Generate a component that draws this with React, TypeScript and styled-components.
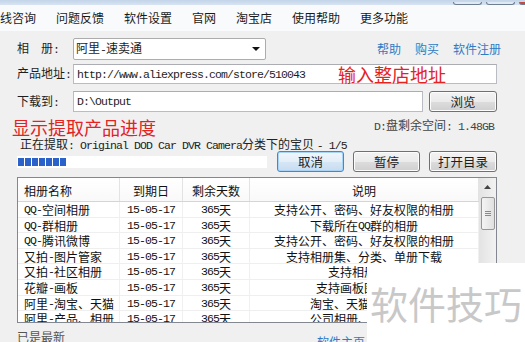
import React from "react";
import styled, {createGlobalStyle} from "styled-components";

const GlobalStyle = createGlobalStyle`
  *, *::before, *::after { box-sizing: border-box; }
  html, body { margin: 0; padding: 0; background: #f0f0f0; }
  body {
    font-family: "Noto Sans CJK SC", "Noto Sans", sans-serif;
    font-size: 12px;
    color: #1e1e1e;
  }
`

const Window = styled.div`
  position: relative;
  width: 525px;
  height: 342px;
  overflow: hidden;
  background: #f0f0f0;
`

const TitleStrip = styled.div`
  height: 5px;
  display: flex;
  justify-content: flex-end;
  align-items: flex-end;
  gap: 4px;
  overflow: hidden;
  background: linear-gradient(#c3d4e9, #d8e4f2);
`

const WinButton = styled.div<{ $close?: boolean }>`
  width: 29px;
  height: 3px;
  border: 1px solid #6f7f93;
  border-top: none;
  border-radius: 0 0 3px 3px;
  background: ${p => p.$close ? "#c8493f" : "#dfe8f3"};
  margin-right: ${p => p.$close ? "-23px" : "0"};
`

const MenuBar = styled.div`
  height: 26px;
  display: flex;
  align-items: center;
  overflow: hidden;
  background: #f9fafb;
`

const MenuTrack = styled.div`
  display: flex;
  align-items: center;
  gap: 20px;
  margin-left: -12px;
  line-height: 16px;
  color: #1a1a1a;
  white-space: nowrap;
`

const Content = styled.div`
  display: flex;
  flex-direction: column;
  padding: 0 28px 0 17px;
`

const FieldRow = styled.div<{ $top: number; $h: number }>`
  display: flex;
  align-items: center;
  margin-top: ${p => p.$top}px;
  height: ${p => p.$h}px;
`

const Label = styled.div`
  width: 56px;
  flex: none;
  white-space: pre;
  line-height: 16px;
`

const Mono = styled.span`
  font-family: "Liberation Mono", "DejaVu Sans Mono", monospace;
  font-size: 11.5px;
  letter-spacing: -0.9px;
`

const Select = styled.div`
  width: 193px;
  height: 100%;
  display: flex;
  align-items: center;
  justify-content: space-between;
  padding: 0 5px 0 2px;
  background: #fff;
  border: 1px solid #acacac;
  border-radius: 2px;
  line-height: 16px;
`

const Links = styled.div`
  margin-left: auto;
  margin-right: -4px;
  display: flex;
  gap: 14px;
  line-height: 16px;
`

const Link = styled.span`
  color: #2f7bc4;
`

const Input = styled.div<{ $w?: number }>`
  position: relative;
  ${p => p.$w ? `width: ${p.$w}px;` : "flex: 1;"}
  height: 100%;
  display: flex;
  align-items: center;
  padding-left: 3px;
  background: #fff;
  border: 1px solid #b9bdc3;
  border-top-color: #abadb3;
  white-space: nowrap;
`

const Note = styled.span`
  color: #e3231f;
  font-size: 18px;
  line-height: 20px;
  white-space: nowrap;
`

const InputNote = styled(Note)`
  position: absolute;
  left: 264px;
  top: 50%;
  transform: translateY(-50%);
`

const Button = styled.div<{ $w: number; $focus?: boolean; $push?: boolean }>`
  width: ${p => p.$w}px;
  height: 21px;
  flex: none;
  display: flex;
  align-items: center;
  justify-content: center;
  margin-left: ${p => p.$push ? "auto" : "0"};
  border: 1px solid ${p => p.$focus ? "#3c8ad0" : "#707070"};
  border-radius: 3px;
  background: ${p => p.$focus
    ? "linear-gradient(#f0f6fb 0%, #e4eef8 50%, #d6e6f5 51%, #c8dcf0 100%)"
    : "linear-gradient(#f3f3f3 0%, #ebebeb 50%, #dddddd 51%, #cfcfcf 100%)"};
  box-shadow: inset 0 0 0 1px ${p => p.$focus ? "#a9d4f5" : "#fcfcfc"};
  line-height: 16px;
  font-size: 12.5px;
`

const NoteRow = styled.div`
  display: flex;
  align-items: flex-start;
  margin-top: 5px;
  height: 20px;
`

const RedNote = styled(Note)`
  margin-left: -5px;
`

const DiskInfo = styled.span`
  margin-left: auto;
  margin-right: 3px;
  margin-top: 1px;
  line-height: 14px;
  color: #444;
`

const StatusLine = styled.div`
  height: 14px;
  line-height: 14px;
  padding-left: 3px;
  color: #222;
  white-space: nowrap;
`

const ActionRow = styled.div`
  display: flex;
  align-items: center;
  height: 21px;
  gap: 9px;
`

const Progress = styled.div`
  width: 250px;
  height: 12px;
  margin-right: 1px;
  padding: 2px 1px;
  display: flex;
  gap: 1px;
  background: #fff;
`

const Block = styled.div`
  width: 6px;
  height: 8px;
  background: #2a62c9;
`

const Table = styled.div`
  margin-top: 5px;
  height: 146px;
  display: flex;
  border: 1px solid #828790;
  background: #fff;
`

const TableBody = styled.div`
  flex: 1;
  overflow: hidden;
`

const Row = styled.div<{ $head?: boolean }>`
  display: grid;
  grid-template-columns: 102px 63px 67px 1fr;
  height: ${p => p.$head ? "24px" : "15.6px"};
  border-bottom: 1px solid ${p => p.$head ? "#d5d5d5" : "#efefef"};
  background: ${p => p.$head ? "linear-gradient(#ffffff, #f9f9f9)" : "#fff"};
`

const Cell = styled.div<{ $left?: boolean; $head?: boolean }>`
  display: flex;
  align-items: center;
  justify-content: ${p => p.$left ? "flex-start" : "center"};
  padding-left: ${p => p.$left ? "6px" : "0"};
  padding-top: ${p => p.$head ? "2px" : "1px"};
  border-right: 1px solid ${p => p.$head ? "#e3e3e3" : "#f0f0f0"};
  line-height: 14px;
  white-space: nowrap;
  color: #111;
`

const ScrollBar = styled.div`
  width: 17px;
  flex: none;
  display: flex;
  flex-direction: column;
  background: linear-gradient(90deg, #e3e3e3, #f2f2f2);
`

const ArrowBox = styled.div`
  height: 17px;
  display: flex;
  align-items: center;
  justify-content: center;
`

const Thumb = styled.div`
  height: 33px;
  margin: 2px 1px 0 2px;
  border: 1px solid #979797;
  border-radius: 2px;
  background: linear-gradient(90deg, #f4f4f4, #e0e0e0);
  display: flex;
  flex-direction: column;
  align-items: center;
  justify-content: center;
  gap: 1px;
`

const Grip = styled.div`
  width: 6px;
  height: 1px;
  background: #8a8a8a;
`

const StatusBar = styled.div`
  margin-top: 6px;
  display: grid;
  grid-template-columns: 300px 1fr;
  line-height: 16px;
  color: #555;
  white-space: nowrap;
`

const FooterLink = styled.span`
  color: #2f7bc4;
  margin-top: 5px;
`

const Watermark = styled.div`
  position: absolute;
  left: 367px;
  top: 263px;
  right: 0;
  bottom: 0;
  display: flex;
  align-items: center;
  padding: 0 0 0 3px;
  background: #fff;
  color: #c8c8c8;
  font-size: 38px;
  line-height: 40px;
  white-space: nowrap;
`

// wraps ASCII runs in the narrow mono face, like SimSun's half-width glyphs
const Txt = ({children}: { children: string }) => (
  <>
    {children.split(/([\x21-\x7e][\x20-\x7e]*[\x21-\x7e]|[\x21-\x7e])/).map((part, i) =>
      /[\x21-\x7e]/.test(part) ? <Mono key={i}>{part}</Mono> : part
    )}
  </>
)

const menus = ["在线咨询", "问题反馈", "软件设置", "官网", "淘宝店", "使用帮助", "更多功能"]

const albums = [
  ["QQ-空间相册", "支持公开、密码、好友权限的相册"],
  ["QQ-群相册", "下载所在QQ群的相册"],
  ["QQ-腾讯微博", "支持公开、密码、好友权限的相册"],
  ["又拍-图片管家", "支持相册集、分类、单册下载"],
  ["又拍-社区相册", "支持相册下载"],
  ["花瓣-画板", "支持画板图片下载"],
  ["阿里-淘宝、天猫", "淘宝、天猫宝贝下载"],
  ["阿里-产品、相册", "公司相册、整店下载"],
]

const App = () => {
  return (
    <Window>
      <GlobalStyle/>
      <TitleStrip>
        <WinButton/>
        <WinButton/>
        <WinButton $close/>
      </TitleStrip>
      <MenuBar>
        <MenuTrack>
          {menus.map(m => <span key={m}>{m}</span>)}
        </MenuTrack>
      </MenuBar>
      <Content>
        <FieldRow $top={7} $h={22}>
          <Label>{"相\u3000册"}<Txt>{":"}</Txt></Label>
          <Select>
            <span><Txt>阿里-速卖通</Txt></span>
            <svg width="8" height="4" viewBox="0 0 8 4">
              <polygon points="0,0 8,0 4,4" fill="#111"/>
            </svg>
          </Select>
          <Links>
            <Link>帮助</Link>
            <Link>购买</Link>
            <Link>软件注册</Link>
          </Links>
        </FieldRow>
        <FieldRow $top={4} $h={20}>
          <Label><Txt>产品地址:</Txt></Label>
          <Input>
            <Mono>http://www.aliexpress.com/store/510043</Mono>
            <InputNote>输入整店地址</InputNote>
          </Input>
        </FieldRow>
        <FieldRow $top={7} $h={21}>
          <Label><Txt>下载到:</Txt></Label>
          <Input $w={350}>
            <Mono>D:\Output</Mono>
          </Input>
          <Button $w={68} $push>浏览</Button>
        </FieldRow>
        <NoteRow>
          <RedNote>显示提取产品进度</RedNote>
          <DiskInfo><Txt>D:盘剩余空间: 1.48GB</Txt></DiskInfo>
        </NoteRow>
        <StatusLine>
          <Txt>正在提取: Original DOD Car DVR Camera分类下的宝贝 - 1/5</Txt>
        </StatusLine>
        <ActionRow>
          <Progress>
            {Array.from({length: 7}).map((_, i) => <Block key={i}/>)}
          </Progress>
          <Button $w={67} $focus>取消</Button>
          <Button $w={67}>暂停</Button>
          <Button $w={68}>打开目录</Button>
        </ActionRow>
        <Table>
          <TableBody>
            <Row $head>
              <Cell $head $left>相册名称</Cell>
              <Cell $head>到期日</Cell>
              <Cell $head>剩余天数</Cell>
              <Cell $head>说明</Cell>
            </Row>
            {albums.map(([name, desc]) => (
              <Row key={name}>
                <Cell $left><Txt>{name}</Txt></Cell>
                <Cell><Mono>15-05-17</Mono></Cell>
                <Cell><Mono>365</Mono>天</Cell>
                <Cell><Txt>{desc}</Txt></Cell>
              </Row>
            ))}
          </TableBody>
          <ScrollBar>
            <ArrowBox>
              <svg width="7" height="4" viewBox="0 0 7 4">
                <polygon points="3.5,0 7,4 0,4" fill="#444"/>
              </svg>
            </ArrowBox>
            <Thumb>
              <Grip/>
              <Grip/>
              <Grip/>
            </Thumb>
          </ScrollBar>
        </Table>
        <StatusBar>
          <span>已是最新</span>
          <FooterLink>软件主页</FooterLink>
        </StatusBar>
      </Content>
      <Watermark>软件技巧</Watermark>
    </Window>
  )
}

export default App
